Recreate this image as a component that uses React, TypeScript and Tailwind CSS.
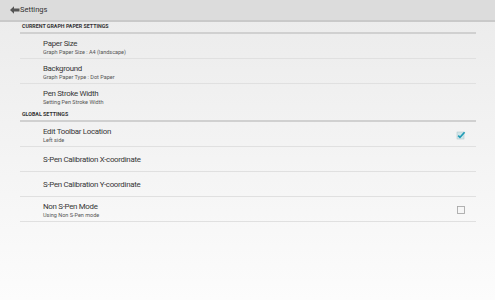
import React from 'react';

type Row = { title: string; sub?: string; check?: 'on' | 'off'; last?: boolean };

const paperRows: Row[] = [
  { title: 'Paper Size', sub: 'Graph Paper Size : A4 (landscape)' },
  { title: 'Background', sub: 'Graph Paper Type : Dot Paper' },
  { title: 'Pen Stroke Width', sub: 'Setting Pen Stroke Width', last: true },
];

const globalRows: Row[] = [
  { title: 'Edit Toolbar Location', sub: 'Left side', check: 'on' },
  { title: 'S-Pen Calibration X-coordinate' },
  { title: 'S-Pen Calibration Y-coordinate' },
  { title: 'Non S-Pen Mode', sub: 'Using Non S-Pen mode', check: 'off' },
];

function CheckBox({ on }: { on: boolean }) {
  if (on) {
    return (
      <svg width="10" height="10" viewBox="0 0 10 10">
        <rect x="1" y="2" width="7" height="7" fill="#cfe6ea" stroke="#b5c9cc" strokeWidth="0.6" />
        <path d="M2.2 5.6 L4 7.4 L8.6 2.2" fill="none" stroke="#1f9bb5" strokeWidth="1.6" />
      </svg>
    );
  }
  return (
    <svg width="10" height="10" viewBox="0 0 10 10">
      <rect x="1.5" y="1.5" width="7" height="7" fill="#f6f6f6" stroke="#a9a9a9" strokeWidth="0.9" />
    </svg>
  );
}

function SettingRow({ row }: { row: Row }) {
  return (
    <div
      className={`flex h-[25px] items-center pl-[23px] pr-[10px] pt-[2px] ${row.last ? '' : 'border-b border-[#e0e0e0]'}`}
    >
      <div className="flex flex-1 flex-col justify-center">
        <div className="text-[7.9px] leading-[10px] tracking-[-0.3px] text-[#363636]">{row.title}</div>
        {row.sub && <div className="text-[5.5px] leading-[7px] text-[#555]">{row.sub}</div>}
      </div>
      {row.check && <CheckBox on={row.check === 'on'} />}
    </div>
  );
}

function SectionHeader({ label, top }: { label: string; top: string }) {
  return (
    <div className={`flex items-end ${top} border-b-2 border-[#d0d0d0] pb-[2px] pl-[2px]`}>
      <span className="text-[5.3px] font-bold leading-[7px] text-[#333]">{label}</span>
    </div>
  );
}

export default function App() {
  return (
    <div
      className="flex h-[300px] w-[495px] flex-col bg-gradient-to-b from-[#ebebeb] to-[#fcfcfc]"
      style={{ fontFamily: 'Roboto, "Noto Sans", sans-serif' }}
    >
      <div className="flex h-[22px] items-center border-b-2 border-[#c9c9c9] bg-[#dcdcdc] pl-[10px]">
        <svg width="10" height="8" viewBox="0 0 10 8">
          <path d="M0 4 L4 0.3 L4 2.4 L9.5 2.4 L9.5 5.6 L4 5.6 L4 7.7 Z" fill="#555" />
        </svg>
        <span className="text-[7.5px] text-[#333]">Settings</span>
      </div>
      <div className="ml-[20px] w-[456px]">
        <SectionHeader label="CURRENT GRAPH PAPER SETTINGS" top="h-[12px]" />
        {paperRows.map(r => (
          <SettingRow row={r} key={r.title} />
        ))}
        <SectionHeader label="GLOBAL SETTINGS" top="h-[13px]" />
        {globalRows.map(r => (
          <SettingRow row={r} key={r.title} />
        ))}
      </div>
    </div>
  );
}
